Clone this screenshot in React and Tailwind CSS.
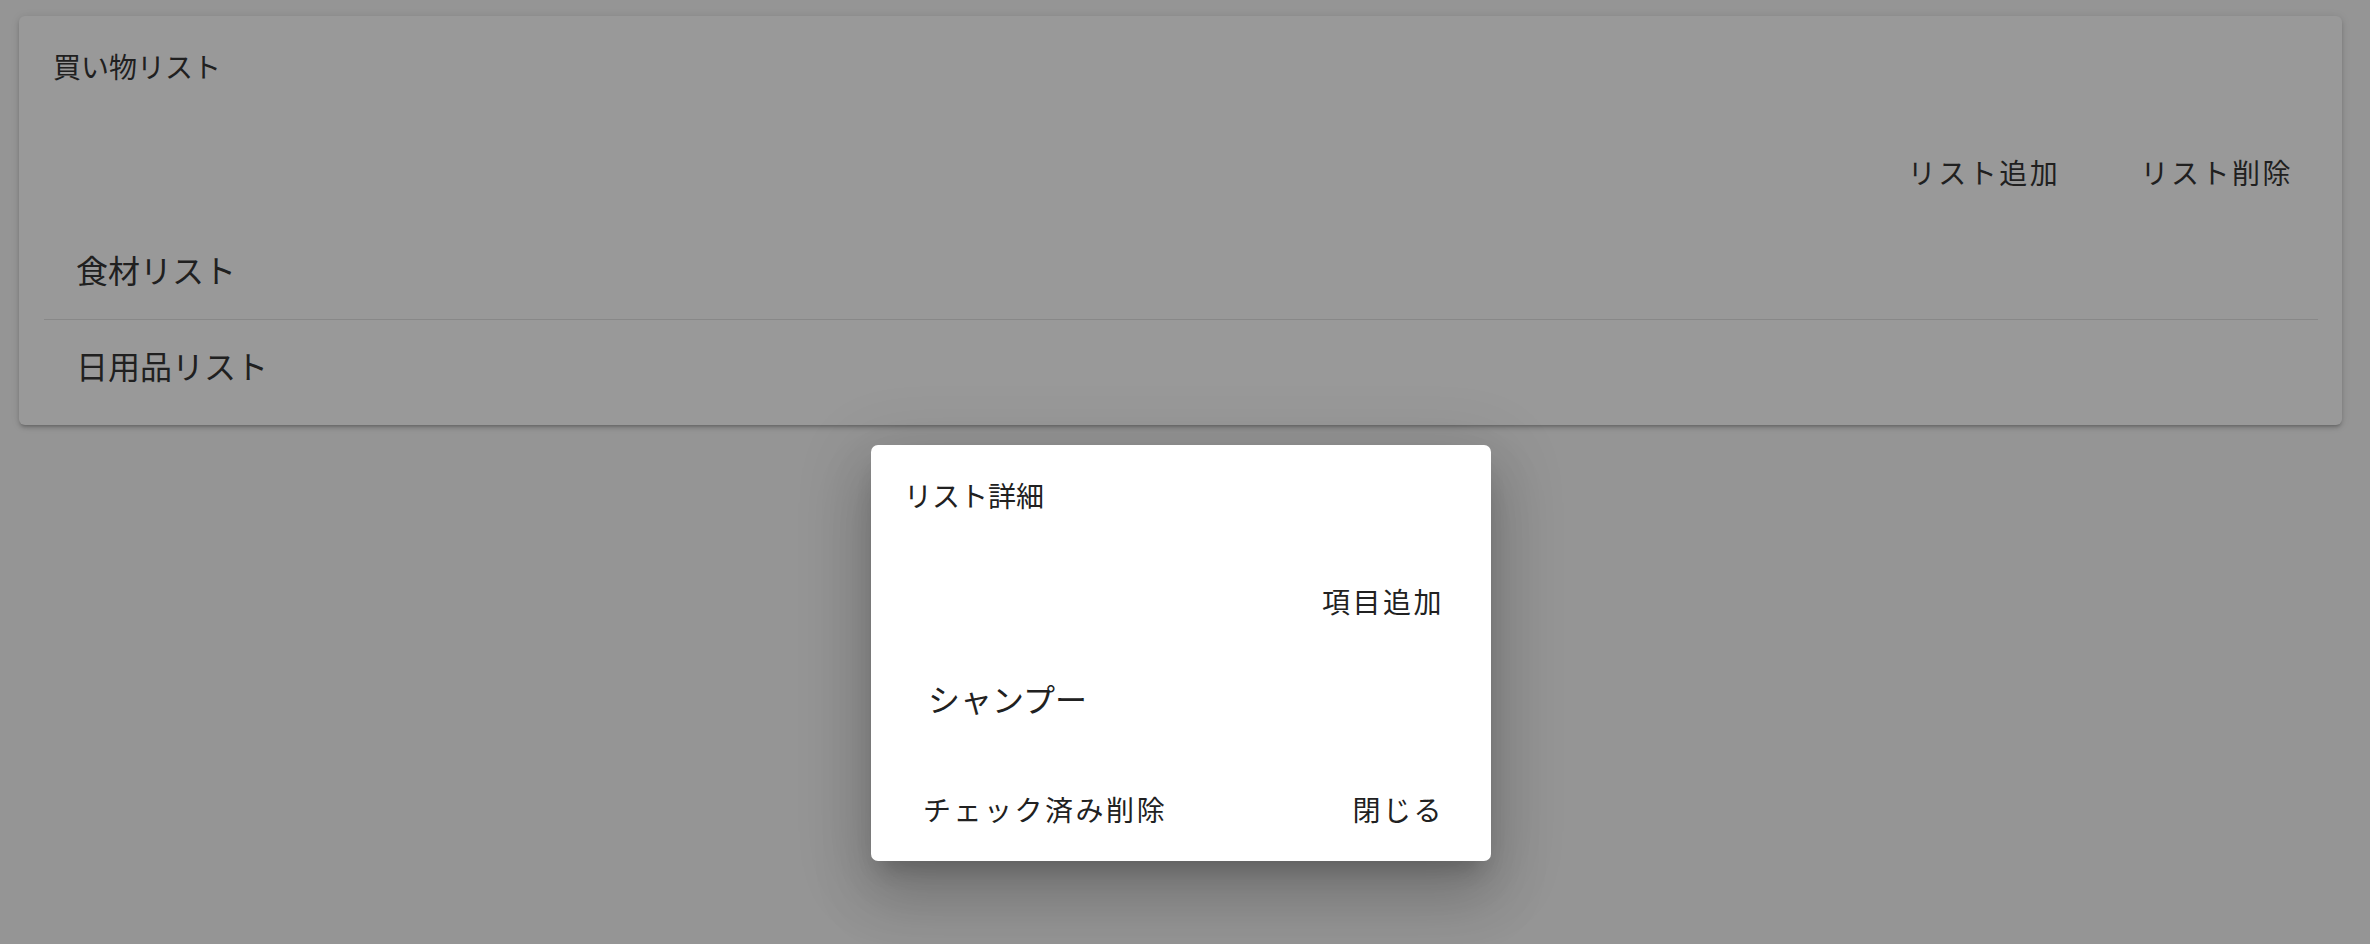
const lists = ['食材リスト', '日用品リスト'];

function TextButton({ children }) {
  return (
    <button className="h-[54px] px-[24px] flex items-center text-[28px] tracking-[0.09em] text-[#212121] rounded-md leading-none">
      {children}
    </button>
  );
}

export default function App() {
  return (
    <div
      className="relative min-h-[944px] bg-[#f7f7f7] pt-[16px] pl-[19px] pr-[28px]"
      style={{ fontFamily: '"Noto Sans CJK JP", "Noto Sans", sans-serif' }}
    >
      {/* page card */}
      <div className="bg-white rounded-[6px] shadow-[0_3px_3px_-2px_rgba(0,0,0,0.2),0_3px_4px_0_rgba(0,0,0,0.14),0_1px_8px_0_rgba(0,0,0,0.12)] pt-[29px] pb-[9px]">
        <div className="h-[42px] flex items-center pl-[34px] text-[28px] leading-none text-[#212121]">
          買い物リスト
        </div>

        <div className="mt-[58px] flex justify-end gap-[32px] pr-[25px]">
          <TextButton>リスト追加</TextButton>
          <TextButton>リスト削除</TextButton>
        </div>

        <div className="mt-[25px] ml-[25px] mr-[24px] divide-y divide-black/[0.12]">
          {lists.map((l) => (
            <div key={l} className="h-[96px] flex items-center pl-[32px] pb-[6px] text-[32px] leading-none text-[#212121]">
              {l}
            </div>
          ))}
        </div>
      </div>

      {/* scrim */}
      <div className="absolute inset-0 bg-[rgba(33,33,33,0.46)]" />

      {/* dialog */}
      <div className="absolute left-[871px] top-[445px] w-[620px] h-[416px] bg-white rounded-[7px] shadow-[0_16px_22px_-10px_rgba(0,0,0,0.2),0_36px_57px_4px_rgba(0,0,0,0.14),0_14px_69px_12px_rgba(0,0,0,0.12)] pt-[29px] pb-[24px] flex flex-col">
        <div className="h-[42px] flex items-center pl-[33px] text-[28px] leading-none text-[#212121]">
          リスト詳細
        </div>

        <div className="mt-[58px] flex justify-end pr-[23px]">
          <TextButton>項目追加</TextButton>
        </div>

        <div className="mt-[38px] h-[64px] flex items-center pl-[57px] text-[32px] leading-none text-[#212121]">
          シャンプー
        </div>

        <div className="mt-[52px] flex justify-between pl-[28px] pr-[23px]">
          <TextButton>チェック済み削除</TextButton>
          <TextButton>閉じる</TextButton>
        </div>
      </div>
    </div>
  );
}
